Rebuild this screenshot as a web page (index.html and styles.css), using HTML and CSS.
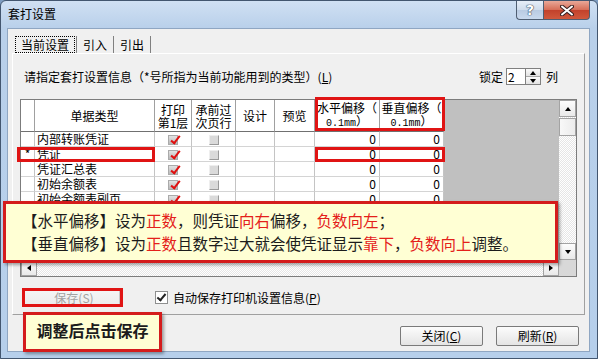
FILE: index.html
```html
<!DOCTYPE html>
<html lang="zh-CN">
<head>
    <meta charset="UTF-8">
    <title>套打设置</title>
    <link rel="stylesheet" href="styles.css">
</head>
<body>

<div class="window">
    <!-- Title bar -->
    <div class="titlebar">
        <span class="title">套打设置</span>
        <div class="caption">
            <span class="cap-btn help">?</span>
            <span class="cap-btn close">
                <svg width="14" height="11" viewBox="0 0 14 11">
                    <path d="M2 1.5 L12 9.5 M12 1.5 L2 9.5" stroke="#3a2020" stroke-width="4" stroke-linecap="round"/>
                    <path d="M2 1.5 L12 9.5 M12 1.5 L2 9.5" stroke="#fff" stroke-width="2" stroke-linecap="round"/>
                </svg>
            </span>
        </div>
    </div>

    <div class="client">
        <!-- Tabs -->
        <div class="tabs">
            <span class="tab active"><span class="focus">当前设置</span></span>
            <span class="tab">引入</span>
            <span class="tab">引出</span>
        </div>

        <div class="pane">
            <div class="pane-top">
                <span class="hint">请指定套打设置信息（*号所指为当前功能用到的类型）(<u>L</u>)</span>
                <span class="lock">
                    锁定
                    <span class="spin-input">2</span>
                    <span class="spin">
                        <span class="spin-btn"><i class="tri-up"></i></span>
                        <span class="spin-btn"><i class="tri-down"></i></span>
                    </span>
                    <span class="lock-unit">列</span>
                </span>
            </div>

            <!-- Data grid -->
            <div class="grid">
                <div class="grid-main">
                    <div class="grid-body">
                        <table class="sheet">
                            <colgroup>
                                <col class="c-ind"><col class="c-name"><col class="c-print"><col class="c-carry">
                                <col class="c-design"><col class="c-preview"><col class="c-h"><col class="c-v">
                            </colgroup>
                            <tr class="head">
                                <th></th>
                                <th>单据类型</th>
                                <th>打印<br>第1层</th>
                                <th>承前过<br>次页行</th>
                                <th>设计</th>
                                <th>预览</th>
                                <th>水平偏移（<br><span class="mm">0.1mm</span>）</th>
                                <th>垂直偏移（<br><span class="mm">0.1mm</span>）</th>
                            </tr>
                            <tr><td></td><td>内部转账凭证</td><td class="mid"><i class="tick"></i></td><td class="mid"><i class="dis"></i></td><td></td><td></td><td class="num">0</td><td class="num">0</td></tr>
                            <tr><td class="mid">*</td><td>凭证</td><td class="mid"><i class="tick"></i></td><td class="mid"><i class="dis"></i></td><td></td><td></td><td class="num">0</td><td class="num">0</td></tr>
                            <tr><td></td><td>凭证汇总表</td><td class="mid"><i class="tick"></i></td><td class="mid"><i class="dis"></i></td><td></td><td></td><td class="num">0</td><td class="num">0</td></tr>
                            <tr><td></td><td>初始余额表</td><td class="mid"><i class="tick"></i></td><td class="mid"><i class="dis"></i></td><td></td><td></td><td class="num">0</td><td class="num">0</td></tr>
                            <tr><td></td><td>初始余额表副页</td><td class="mid"><i class="tick"></i></td><td class="mid"><i class="dis"></i></td><td></td><td></td><td class="num">0</td><td class="num">0</td></tr>
                            <tr><td></td><td>明细账</td><td class="mid"><i class="tick"></i></td><td class="mid"><i class="dis"></i></td><td></td><td></td><td class="num">0</td><td class="num">0</td></tr>
                            <tr><td></td><td>总账</td><td class="mid"><i class="tick"></i></td><td class="mid"><i class="dis"></i></td><td></td><td></td><td class="num">0</td><td class="num">0</td></tr>
                            <tr><td></td><td>日记账</td><td class="mid"><i class="tick"></i></td><td class="mid"><i class="dis"></i></td><td></td><td></td><td class="num">0</td><td class="num">0</td></tr>
                        </table>
                    </div>
                    <div class="vscroll">
                        <span class="sb-btn"><i class="tri-up"></i></span>
                        <span class="thumb"></span>
                        <span class="track"></span>
                        <span class="sb-btn"><i class="tri-down"></i></span>
                    </div>
                </div>
                <div class="hscroll-row">
                    <div class="hscroll">
                        <span class="sb-btn"><i class="tri-left"></i></span>
                        <span class="track"></span>
                        <span class="sb-btn"><i class="tri-right"></i></span>
                    </div>
                    <div class="corner"></div>
                </div>
            </div>

            <div class="save-row">
                <button class="btn save" disabled>保存(<u>S</u>)</button>
                <label class="auto"><span class="cb"></span>自动保存打印机设置信息(<u>P</u>)</label>
            </div>
        </div>

        <div class="footer">
            <button class="btn">关闭(<u>C</u>)</button>
            <button class="btn">刷新(<u>R</u>)</button>
        </div>
    </div>

    <!-- Annotation marks -->
    <div class="mark m-row"></div>
    <div class="mark m-head"></div>
    <div class="mark m-zero"></div>
    <div class="mark m-save"></div>

    <div class="callout big">
        <p>【水平偏移】设为<em>正数</em>，则凭证<em>向右</em>偏移，<em>负数向左</em>；</p>
        <p>【垂直偏移】设为<em>正数</em>且数字过大就会使凭证显示<em>靠下</em>，<em>负数向上</em>调整。</p>
    </div>
    <div class="callout small">调整后点击保存</div>
</div>

</body>
</html>
```

FILE: styles.css
```css
* {
    box-sizing: border-box;
}
body {
    margin: 0;
    background: #7e9cc0;
    font-family: "Noto Sans CJK SC", sans-serif;
    font-size: 12px;
    color: #000;
}
.window {
    position: relative;
    width: 598px;
    height: 359px;
    border: 1px solid #43566f;
    border-radius: 6px 6px 0 0;
    background: linear-gradient(#d0e0f3 0, #b9d0ea 27px, #b6cfeb 100%);
    overflow: hidden;
}

/* Title bar */
.titlebar {
    height: 27px;
    display: flex;
    justify-content: space-between;
    align-items: flex-start;
}
.title {
    padding: 5px 0 0 7px;
    line-height: 16px;
}
.caption {
    display: flex;
    margin-right: 7px;
}
.cap-btn {
    height: 19px;
    display: flex;
    align-items: center;
    justify-content: center;
    border: 1px solid #4f5e72;
    border-top: none;
}
.help {
    width: 27px;
    border-right: none;
    border-radius: 0 0 0 4px;
    background: linear-gradient(#e6eef8, #cfdcec 50%, #b9cbe2 51%, #c9d9ee);
    color: #fff;
    font-family: "DejaVu Sans", sans-serif;
    font-size: 14px;
    font-weight: bold;
    text-shadow: 0 0 1px #34455c, 0 0 1px #34455c, 0 0 1px #34455c;
}
.close {
    width: 47px;
    border-radius: 0 0 4px 0;
    background: linear-gradient(#e9a898, #d66c56 50%, #c2412b 51%, #d0583c);
}

/* Client area */
.client {
    margin-left: 6px;
    width: 583px;
    height: 324px;
    background: #f0f0f0;
    border: 1px solid #8fa6c2;
    padding: 7px 4px 0 4px;
}
.tabs {
    display: flex;
    height: 17px;
    padding-left: 2px;
}
.tab {
    padding: 0 6px;
    line-height: 17px;
    border-right: 1px solid #808080;
}
.tab.active {
    padding: 0 2px;
}
.focus {
    display: inline-block;
    padding: 0 5px;
    line-height: 15px;
    margin-top: 1px;
    outline: 1px dotted #000;
}
.pane {
    height: 262px;
    border: 1px solid;
    border-color: #fff #a0a0a0 #a0a0a0 #fff;
    padding: 0 7px;
}
.pane-top {
    height: 45px;
    display: flex;
    justify-content: space-between;
    align-items: center;
    padding: 0 19px 0 4px;
}
.lock {
    display: flex;
    align-items: center;
}
.spin-input {
    width: 19px;
    height: 17px;
    margin-left: 3px;
    background: #fff;
    border: 1px solid #808080;
    border-right: none;
    line-height: 15px;
    padding-left: 1px;
}
.spin {
    display: flex;
    flex-direction: column;
    width: 16px;
    height: 17px;
    border: 1px solid #808080;
}
.spin-btn {
    flex: 1;
    display: flex;
    align-items: center;
    justify-content: center;
    background: linear-gradient(#fbfbfb, #e2e2e2);
    border-bottom: 1px solid #a8a8a8;
}
.spin-btn:last-child {
    border-bottom: none;
}
.lock-unit {
    margin-left: 5px;
}

/* Arrows */
.tri-up, .tri-down, .tri-left, .tri-right {
    width: 0;
    height: 0;
    border: 3px solid transparent;
}
.tri-up {
    border-bottom: 4px solid #000;
    border-top: none;
}
.tri-down {
    border-top: 4px solid #000;
    border-bottom: none;
}
.tri-left {
    border-right: 4px solid #000;
    border-left: none;
}
.tri-right {
    border-left: 4px solid #000;
    border-right: none;
}

/* Grid */
.grid {
    width: 557px;
    height: 178px;
    border: 1px solid #7c7c7c;
    display: flex;
    flex-direction: column;
    background: #c0c0c0;
}
.grid-main {
    display: flex;
    height: 160px;
}
.grid-body {
    flex: 1;
    overflow: hidden;
}
.sheet {
    width: 423px;
    table-layout: fixed;
    border-collapse: separate;
    border-spacing: 0;
    background: #fff;
}
.c-ind { width: 14px; }
.c-name { width: 120px; }
.c-print { width: 37px; }
.c-carry { width: 44px; }
.c-design { width: 39px; }
.c-preview { width: 40px; }
.c-h { width: 65px; }
.c-v { width: 64px; }
.sheet tr {
    height: 15px;
}
.sheet tr.head {
    height: 32px;
}
.sheet th {
    font-weight: normal;
    line-height: 13px;
    padding: 0;
    border-right: 1px solid #a0a0a0;
    border-bottom: 1px solid #707070;
    white-space: nowrap;
}
.mm {
    font-family: "Liberation Mono", monospace;
    font-size: 10px;
}
.sheet td {
    padding: 0 2px;
    line-height: 14px;
    border-right: 1px solid #c4c4c4;
    border-bottom: 1px solid #d4d4d4;
    white-space: nowrap;
    overflow: hidden;
}
.sheet td.mid {
    text-align: center;
    padding: 0;
}
.sheet td.num {
    text-align: right;
    padding-right: 3px;
}
.tick, .dis {
    display: inline-block;
    width: 10px;
    height: 10px;
    vertical-align: -1px;
}
.tick {
    background: linear-gradient(#e2e2e2, #b9b9b9);
    border: 1px solid #aaa;
}
.tick::after {
    content: "";
    display: block;
    width: 3px;
    height: 8px;
    margin: -2px 0 0 4px;
    border: solid #e01010;
    border-width: 0 2px 2px 0;
    transform: rotate(38deg);
}
.dis {
    background: #dadada;
    border: 1px solid;
    border-color: #eee #9a9a9a #9a9a9a #eee;
}

/* Scrollbars */
.vscroll {
    width: 17px;
    display: flex;
    flex-direction: column;
    background: repeating-conic-gradient(#fff 0 25%, #e6e6e6 0 50%) 0 0 / 2px 2px;
}
.sb-btn {
    height: 17px;
    flex: none;
    display: flex;
    align-items: center;
    justify-content: center;
    background: linear-gradient(#fdfdfd, #e9e9e9);
    border: 1px solid #a3a3a3;
}
.thumb {
    height: 18px;
    margin-top: 1px;
    background: linear-gradient(to right, #f8f8f8, #ececec);
    border: 1px solid #a3a3a3;
}
.track {
    flex: 1;
}
.hscroll-row {
    display: flex;
    height: 16px;
}
.hscroll {
    flex: 1;
    display: flex;
    background: repeating-conic-gradient(#fff 0 25%, #e6e6e6 0 50%) 0 0 / 2px 2px;
}
.hscroll .sb-btn {
    width: 16px;
    height: 16px;
}
.corner {
    width: 17px;
    background: #d8d8d8;
}

/* Bottom rows */
.save-row {
    display: flex;
    align-items: center;
    margin-top: 11px;
    height: 19px;
}
.btn {
    width: 83px;
    height: 20px;
    padding: 0;
    font: inherit;
    color: #000;
    line-height: 18px;
    border: 1px solid #7a7a7a;
    border-radius: 2px;
    background: linear-gradient(#fcfcfc, #e4e4e4);
}
.btn.save {
    width: 97px;
    height: 19px;
    margin-left: 3px;
    padding-left: 5px;
    color: #a2a2a2;
    border-color: #c8c8c8;
    background: linear-gradient(#f6f6f6, #ececec);
}
.auto {
    display: flex;
    align-items: center;
    margin-left: 35px;
}
.cb {
    width: 13px;
    height: 13px;
    margin-right: 5px;
    background: #fff;
    border: 1px solid #8e8f8f;
}
.cb::after {
    content: "";
    display: block;
    width: 3px;
    height: 7px;
    margin: 0 0 0 3px;
    border: solid #222;
    border-width: 0 2px 2px 0;
    transform: rotate(40deg);
}
.footer {
    display: flex;
    justify-content: flex-end;
    gap: 13px;
    margin-top: 11px;
    padding-right: 6px;
}

/* Annotations */
.mark {
    position: absolute;
    border: 3px solid #e01414;
}
.m-row { left: 16px; top: 146px; width: 138px; height: 15px; }
.m-head { left: 314px; top: 96px; width: 130px; height: 34px; }
.m-zero { left: 314px; top: 146px; width: 130px; height: 15px; }
.m-save { left: 21px; top: 287px; width: 101px; height: 19px; }

.callout {
    position: absolute;
    background: #ffffd4;
    border: 3px solid #d41c1c;
    box-shadow: 2px 2px 3px rgba(0, 0, 0, 0.35);
    color: #1c1c1c;
}
.callout.big {
    left: 2px;
    top: 200px;
    width: 555px;
    height: 62px;
    padding: 5px 0 0 16px;
    font-size: 15.5px;
    line-height: 23px;
}
.callout p {
    margin: 0;
    white-space: nowrap;
}
.callout em {
    font-style: normal;
    color: #e4201a;
}
.callout.small {
    left: 22px;
    top: 311px;
    width: 139px;
    height: 40px;
    font-size: 16px;
    font-weight: bold;
    line-height: 30px;
    text-align: center;
}
```
